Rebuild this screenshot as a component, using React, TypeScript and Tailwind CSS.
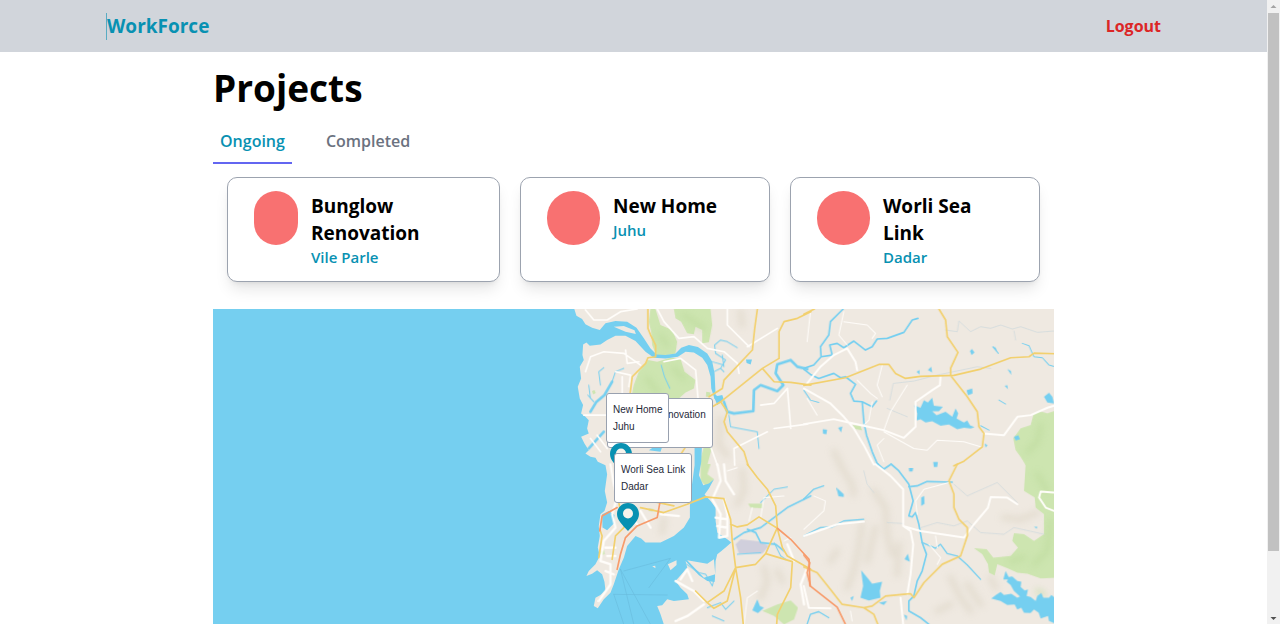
import { useState } from "react";

type Project = { name: string; place: string; avatar: string };

const projects: Project[] = [
  { name: "Bunglow Renovation", place: "Vile Parle", avatar: "w-[44px]" },
  { name: "New Home", place: "Juhu", avatar: "w-[53px]" },
  { name: "Worli Sea Link", place: "Dadar", avatar: "w-[53px]" },
];

// Map tiles share one scale: NW, SW, NE and SE quarters of the land area.
const NW = "translate(1041 -12)";
const SW = "translate(1041 465)";
const NE = "translate(1770 -12)";
const SE = "translate(1770 465)";

function MapDrawing() {
  return (
    <svg
      viewBox="0 0 2520 1140"
      preserveAspectRatio="xMinYMin slice"
      className="block h-full w-full bg-[#efe9e1]"
      fill="none"
      strokeLinejoin="round"
      strokeLinecap="round"
      role="img"
      aria-label="Map of project sites"
    >
      <defs>
        <filter id="soft" x="-20%" y="-20%" width="140%" height="140%">
          <feGaussianBlur stdDeviation="9" />
        </filter>
      </defs>

      {/* hills */}
      <g stroke="#d9d1c1" strokeWidth="18" opacity="0.5" filter="url(#soft)">
        <g transform={SE}>
          <path d="M110 5 L145 60 L150 90 M210 80 L245 130 L250 210 L265 270 M175 180 L165 250 L150 320 L130 370 M100 260 L80 290 M285 240 L280 330 M600 160 L650 165 L700 145 M440 340 L470 400 L500 440 M490 360 L530 420 M560 340 L575 370 M440 420 L400 440 M215 190 L190 290" />
        </g>
        <g transform={SW}>
          <path d="M545 20 L550 80 L530 120 M610 310 L620 350 L600 400 M650 320 L665 350 M310 165 L305 205" />
        </g>
        <g transform={NW}>
          <path d="M540 20 L545 60 M480 340 L475 420 L500 450 M820 440 L840 480" />
        </g>
      </g>

      {/* parks */}
      <g fill="#cde5b0">
        <path transform={NW} d="M285 12 L300 60 L335 75 L350 110 L345 145 L290 155 L275 120 L272 80 L265 50 L270 12 Z M340 12 L450 12 L455 60 L445 112 L425 115 L425 75 L405 65 L400 88 L380 85 L362 50 L345 40 Z M262 165 L290 170 L330 158 L360 160 L372 200 L405 225 L400 250 L375 262 L355 280 L212 280 L220 240 L235 200 Z M437 260 L450 262 L448 275 L436 275 Z M430 425 L455 425 L440 480 L415 480 Z M95 258 L102 255 L106 264 L98 268 Z" />
        <path transform={SW} d="M420 0 L450 0 L440 30 L460 45 L440 70 L420 50 Z M562 118 L605 118 L605 132 L570 130 Z M605 440 L650 420 L690 408 L712 430 L700 465 L670 480 L640 455 Z M120 262 L130 258 L133 270 L122 273 Z M265 132 L280 135 L276 142 L265 140 Z" />
        <path transform={NE} d="M688 330 L705 318 L730 325 L760 315 L760 480 L665 480 L650 455 L635 435 L628 400 L650 370 L680 360 Z M145 360 L170 362 L175 376 L155 372 Z" />
        <path transform={SE} d="M665 0 L760 0 L760 340 L710 342 L670 328 L640 325 L610 312 L580 300 L572 333 L555 325 L552 300 L535 270 L510 252 L548 255 L568 280 L620 275 L642 250 L625 230 L630 207 L660 210 L690 230 L720 210 L720 150 L695 130 L692 100 L660 80 Z" />
      </g>
      <g stroke="#b9d898" strokeWidth="14" opacity="0.55" filter="url(#soft)">
        <path transform={NW} d="M300 90 L320 120 M370 30 L430 70 M260 220 L290 260 M340 190 L370 220" />
        <path transform={SE} d="M700 30 L730 80 M740 170 L730 260 L690 300 M620 290 L660 280 M700 380 L720 390" />
        <path transform={NE} d="M710 360 L700 410 L670 440" />
      </g>

      {/* salt pans */}
      <path transform={SW} d="M540 225 L600 232 L625 245 L605 268 L535 268 L525 240 Z" fill="#d0cfdc" />

      {/* sea */}
      <path
        transform={NW}
        fill="#75cff0"
        d="M-1041 0 H38 L48 32 L65 42 L75 58 L95 68 L118 75 L135 55 L165 48 L200 50 L228 68 L250 100 L270 130 L288 148 L315 150 L345 145 L362 128 L385 120 L412 126 L440 145 L455 170 L462 205 L465 270 L485 280 L482 290 L462 282 L452 250 L450 215 L440 180 L425 158 L400 142 L375 140 L352 155 L315 160 L280 158 L255 140 L225 108 L195 92 L165 92 L140 105 L120 118 L88 122 L78 112 L68 118 L66 150 L70 165 L58 185 L62 220 L52 245 L58 280 L68 300 L62 325 L75 335 L85 345 L80 370 L85 385 L62 395 L72 415 L85 435 L75 445 L90 455 L105 458 L112 470 L135 480 L140 507 L133 557 L140 592 L132 617 L120 627 L115 662 L118 692 L112 727 L118 752 L105 777 L85 797 L78 812 L95 805 L110 795 L125 807 L132 829 L135 855 L120 869 L105 877 L100 902 L112 909 L130 882 L150 862 L160 837 L175 792 L190 757 L200 722 L225 692 L242 700 L255 712 L300 712 L340 692 L370 667 L388 637 L388 602 L394 540 L402 480 L402 424 L424 424 L422 470 L415 510 L428 540 L445 535 L460 522 L445 550 L432 568 L450 587 L465 607 L465 647 L470 682 L500 702 L512 712 L495 727 L470 747 L465 767 L464 800 L462 830 L440 827 L415 810 L375 767 L380 787 L345 827 L360 847 L380 867 L385 882 L340 887 L320 882 L305 900 L290 902 L300 927 L310 957 L330 1160 H-1041 Z"
      />
      <g fill="#efe9e1">
        <path transform={SW} d="M322 300 L348 288 L348 302 L330 318 Z M275 306 L284 304 L285 312 Z M380 288 L440 298 L460 285 L464 330 L430 340 Z" />
        <path transform={NW} d="M160 65 L190 63 L222 76 L226 87 L195 80 Z" />
      </g>
      <path transform={SW} d="M125 150 L145 140 L162 152 L160 178 L140 198 L126 190 Z" fill="#75cff0" />
      <g transform={SW} stroke="#69bdde" strokeWidth="2">
        <path d="M190 320 L330 282 L265 370 M180 315 L270 480 M180 315 L220 480 M160 390 L320 392 M160 390 L190 480" />
      </g>

      {/* lakes */}
      <g fill="#75cff0">
        <path transform={NW} d="M556 163 L574 163 L570 178 L558 174 Z M265 435 L285 422 L305 425 L300 440 Z M460 275 L485 270 L490 285 L470 300 Z" />
        <path transform={NE} d="M331 300 L350 308 L360 285 L372 292 L385 278 L390 302 L417 305 L405 318 L385 318 L398 330 L425 320 L445 335 L455 310 L463 325 L458 340 L480 352 L490 346 L498 360 L512 366 L500 370 L480 368 L460 372 L435 358 L410 362 L385 348 L365 352 L350 342 L338 346 L340 325 Z M338 200 L347 195 L347 208 Z M372 195 L382 185 L385 202 Z M498 138 L504 132 L512 142 L503 150 Z M488 255 L505 250 L506 265 L492 270 Z M565 125 L575 127 L580 140 Z M610 192 L621 198 L622 210 Z M602 242 L610 240 L612 252 Z M720 275 L735 263 L745 275 L750 295 L730 292 Z M630 395 L643 390 L648 402 L635 406 Z M57 372 L70 374 L68 387 L58 386 Z M103 368 L116 364 L112 382 Z M542 415 L551 420 L545 427 Z M388 470 L402 470 L400 485 L390 485 Z" />
        <path transform={SE} d="M172 318 L195 345 L205 358 L235 352 L228 380 L230 400 L195 408 L170 400 L178 365 Z M98 70 L120 90 L120 98 L104 96 Z M302 285 L312 268 L318 292 Z M315 12 L328 12 L326 22 L316 22 Z M352 100 L361 95 L362 118 L352 125 Z M140 400 L150 395 L145 410 Z M300 450 L310 455 L308 468 Z M225 415 L250 410 L240 422 Z M690 187 L700 187 L698 193 Z M562 402 L578 390 L590 383 L600 392 L622 388 L640 400 L648 396 L630 380 L620 362 L608 352 L612 345 L598 345 L605 320 L614 338 L625 336 L640 350 L652 352 L650 368 L662 378 L672 375 L668 395 L680 398 L695 410 L700 395 L712 386 L718 400 L735 400 L742 392 L760 405 L760 480 L735 470 L732 455 L710 462 L704 445 L690 435 L680 446 L660 445 L652 430 L640 435 L632 420 L610 422 L590 410 Z" />
        <path transform={SW} d="M575 438 L590 405 L598 425 L610 430 L592 446 Z" />
      </g>

      {/* rivers */}
      <g stroke="#75cff0" strokeWidth="5">
        <path transform={NW} strokeWidth="8" d="M90 320 L108 290 L132 270 L155 230 M85 430 L130 380 M490 290 L500 320 L520 325 L578 318 L580 255 L600 240 L650 258 L668 240 L645 205 L650 178 L690 165 L710 185 L740 192" />
        <path transform={NW} strokeWidth="3" d="M155 230 L165 200 L190 190 M90 280 L85 240 M120 240 L115 200 L130 188 M462 120 L480 105 L500 110 L530 128 M462 120 L465 145 L495 165 L480 190 L460 200 M455 170 L490 180 M302 180 L312 215 L328 250 M505 330 L510 365 L590 380 L595 430 M480 190 L490 200 M485 150 L490 185 M100 290 L82 270" />
        <path transform={NE} d="M118 12 L80 50 L75 90 L50 125 L52 155 L30 180 L0 190 M52 155 L85 150 L78 120 L100 115 L120 128 L150 108 L185 135 L205 125 L220 102 L250 100 L300 82 L325 45 L342 40 M0 192 L20 208 L45 220 L90 205 L110 218 L125 215 M125 215 L155 238 L140 265 L150 288 L175 290 L180 350 L188 390 L205 440 L222 480 M175 290 L205 305 L218 288" />
        <path transform={NE} strokeWidth="3" d="M655 115 L675 122 L685 145 L690 155 L715 158 L735 180 L750 184 M0 255 L20 285 L45 292 M585 285 L605 297 M567 125 L583 145 M530 362 L555 375" />
        <path transform={SE} d="M222 0 L240 15 L262 0 L285 20 L315 60 L328 110 L315 155 L325 158 L335 145 L345 180 L355 235 L368 270 L355 320 L340 350 L330 395 L315 410 L315 440 L350 460 L375 480 M315 68 L340 65 L370 52 L445 54" />
        <path transform={SE} strokeWidth="4" d="M355 235 L395 252 L410 240 L430 268 L460 275 L490 302 L530 345 M0 215 L50 190 L85 188 L120 170 L180 165 M0 105 L30 75 L60 65 M10 480 L20 450 L45 442 L75 460" />
        <path transform={SW} d="M520 225 L550 205 L600 190 L640 160 L680 130 L750 95 M560 195 L585 205 L600 235 L645 240 L670 260" />
        <path transform={SW} strokeWidth="3" d="M600 115 L640 75 L680 68 M530 270 L600 265 M378 300 L415 325 L435 330 L455 365 L462 335 M440 430 L480 415 L495 435 L520 410 M455 455 L490 470 M640 235 L660 275 L675 285" />
      </g>
      <g stroke="#cbd8dc" strokeWidth="2">
        <path transform={NE} d="M425 75 L460 80 L465 48 L500 80 L530 65 L560 70 L590 60 L625 72 L650 65 L700 82 L750 78 M258 285 L268 235 L330 228 L400 210 L520 185 L560 190 M250 310 L310 335 M630 78 L635 105" />
        <path transform={SE} d="M180 20 L190 60 L210 85 M352 190 L400 175 L450 185 L490 170 L530 205 L600 210 L630 190 L720 210 M450 60 L490 95 L580 55 L640 115 M250 175 L300 178" />
      </g>

      {/* minor roads */}
      <g stroke="#fffdfa" strokeWidth="5">
        <path transform={NW} d="M75 15 L100 45 L140 45 L180 20 L230 12 M290 12 L310 50 L355 100 L400 95 L440 130 L490 140 L530 175 L535 205 M75 200 L90 155 L130 140 L190 145 L240 180 M195 135 L200 175 L235 170 M165 200 L210 210 L205 245 M185 215 L185 265 M310 170 L360 160 L405 195 L412 280 M500 12 L500 60 L565 125 M560 125 L650 70 M620 380 L520 430 L522 480 M450 425 L470 480 M680 250 L640 295 L600 300 M680 250 L690 370 M640 370 L740 357 M90 400 L120 440 M110 390 L140 430 M70 330 L140 330" />
        <path transform={SW} strokeWidth="7" d="M150 0 L160 60 L170 100 L155 150 L165 190 L130 230 L120 290 L150 300 L150 360 L115 410 M470 0 L480 50 L455 105 L480 150 L475 220 L500 215 L500 150 L490 105 M490 0 L495 50 L520 90 M345 350 L400 380 L430 410 M360 345 L380 315 L395 350 M430 420 L380 455 L345 470 M300 150 L355 155 M680 240 L700 290 M240 140 L270 190 M205 150 L230 180 M135 250 L165 250 M140 275 L165 275 M135 320 L160 330 M465 160 L500 165 M470 185 L500 190 M738 315 L720 360 L730 420" />
        <path transform={SW} strokeWidth="3" d="M600 160 L610 100 L670 95 M500 20 L530 10 M575 130 L565 170 M670 230 L690 220 M550 480 L560 400 L590 380" />
        <path transform={NE} strokeWidth="6" d="M0 250 L80 295 L120 335 L150 370 L180 420 L210 478 M0 357 L90 342 L125 350 L180 362 L240 375 L300 398 L335 365 L335 290 L385 255 L408 240 L410 212 M10 235 L50 185 L90 150 L130 130 L155 170 L160 195 M540 385 L600 390 L640 335 L680 330 L730 308 L750 302" />
        <path transform={NE} strokeWidth="3" d="M120 20 L105 90 L130 120 M120 50 L190 60 L215 85 L205 100 M235 180 L220 240 L235 275 M160 225 L200 265 L220 280 M310 240 L260 320 L240 375 M240 380 L330 430 L370 435 L400 405 L480 410 L530 425 M20 20 L10 110 M205 290 L195 345 L180 360 M10 280 L40 330 M240 400 L220 420 L240 470" />
        <path transform={SE} strokeWidth="6" d="M215 0 L260 35 L298 75 L298 185 L320 200 L328 240 L320 330 L310 390 M298 185 L350 200 L480 220 L510 180 L552 130 L560 98 L610 100 L640 120 M290 400 L298 480 M0 365 L15 430 L80 432 M0 215 L100 180 L180 172 M750 85 L710 82 L705 100 L725 130 L750 140" />
        <path transform={SE} strokeWidth="3" d="M435 55 L360 75 L335 110 L340 150 M0 195 L60 140 L65 110 L30 95 M395 215 L400 250 M375 240 L410 280 L400 300 M140 440 L145 470" />
      </g>

      {/* highways */}
      <g stroke="#f2d06e" strokeWidth="5">
        <path transform={NW} d="M262 12 L262 70 L270 90 L285 120 L285 155 L262 158 L255 175 L215 215 L208 270 M590 12 L582 70 L575 135 L490 225 L485 250 L445 275 M750 20 L710 40 L670 50 L655 80 L655 160 L605 190 L480 290 L455 305 M605 190 L640 230 L690 232 L750 240 M480 290 L500 320 L490 350 L500 380 L550 440 L562 480 M375 425 L362 445" />
        <path transform={SW} d="M560 0 L590 40 L620 75 L645 125 L650 190 L615 268 L585 300 L525 310 L490 380 L440 415 L405 380 M490 105 L510 165 L515 230 L525 310 L540 400 L548 480 M510 180 L530 188 L560 182 L595 158 L650 192 L665 250 L680 275 L750 315 M440 415 L460 432 L500 410 L525 310 M240 130 L310 145 L380 120 L435 98 L490 103 M615 268 L695 292 L690 370 L650 450 L648 480 M210 150 L190 190 L165 215 L155 285 M115 280 L125 215 L118 195 M175 115 L180 140 M280 112 L340 125" />
        <path transform={NE} d="M0 28 L32 12 M0 241 L125 218 L225 178 L255 178 L275 205 L305 220 L350 214 L450 211 L530 192 L620 158 L675 155 L690 144 L755 146 M405 12 L425 45 L430 95 L462 142 L440 190 L440 211 L490 275 L520 320 L525 365 L540 385 L535 425 L480 468 L450 482" />
        <path transform={SE} d="M460 0 L435 50 L450 90 L450 130 L465 165 L490 190 L490 215 L470 275 L415 300 L360 355 L330 400 L320 388 L300 390 L245 395 L205 425 L180 430 L115 420 L80 375 L40 325 L0 308 M180 430 L210 450 L222 480 L235 660" />
      </g>
      <g stroke="#f79b6b" strokeWidth="5">
        <path transform={SW} d="M170 315 L180 270 L195 220 L230 185 L290 160 L298 115 M170 130 L125 155 L118 200 M650 192 L690 225 L745 285 L748 365" />
        <path transform={SE} d="M0 272 L18 295 L10 325 L20 365 L100 428 L125 480 L180 660" />
      </g>
    </svg>
  );
}

function Pin() {
  return (
    <svg viewBox="0 0 22 28" className="h-[28px] w-[22px]" aria-hidden="true">
      <path
        fill="#0891b2"
        d="M11 0C4.900 0 0 4.900 0 11c0 6.500 5.500 10.800 11 17 5.500-6.200 11-10.500 11-17C22 4.900 17.100 0 11 0Z"
      />
      <circle cx="11" cy="10.500" r="5" fill="#f7f3ec" />
    </svg>
  );
}

function MapLabel({ name, place, className }: { name: string; place: string; className: string }) {
  return (
    <div
      className={`absolute whitespace-nowrap rounded-[3px] border border-gray-400 bg-white px-[6px] py-[7px] font-['Liberation_Sans',sans-serif] text-[10px] leading-[17px] text-gray-800 ${className}`}
    >
      <p>{name}</p>
      <p>{place}</p>
    </div>
  );
}

function ProjectCard({ name, place, avatar }: Project) {
  return (
    <article className="flex items-start gap-[13px] rounded-[10px] border border-[#9ca3af] bg-white px-[26px] py-[13px] shadow-lg">
      <div className={`h-[54px] shrink-0 rounded-[27px] bg-[#f87171] ${avatar}`} />
      <div className="min-w-0 flex-1 pt-[2px] pr-4">
        <h2 className="text-[19px] font-bold leading-[27px] text-black">{name}</h2>
        <p className="text-[15px] font-semibold leading-[21px] text-[#0891b2]">{place}</p>
      </div>
    </article>
  );
}

export default function App() {
  const [tab, setTab] = useState("Ongoing");
  return (
    <div className="flex h-screen bg-white font-['Open_Sans','Noto_Sans',sans-serif]">
      <div className="min-w-0 flex-1 overflow-y-auto [scrollbar-width:none]">
        <header className="flex h-[52px] items-center justify-between bg-[#d1d5db] px-[106px]">
          <a href="#" className="border-l border-[#0891b2]/60 text-[19px] font-bold leading-[27px] text-[#0891b2]">
            WorkForce
          </a>
          <button type="button" className="text-[16px] font-bold leading-[27px] text-[#dc2626]">
            Logout
          </button>
        </header>

        <main className="mx-auto max-w-[841px]">
          <h1 className="pt-[12px] text-[37px] font-bold leading-[48px] text-black">Projects</h1>

          <div role="tablist" className="mt-[8px] flex gap-[27px]">
            {["Ongoing", "Completed"].map((label) => (
              <button
                key={label}
                type="button"
                role="tab"
                aria-selected={tab === label}
                onClick={() => setTab(label)}
                className={`border-b-2 px-[7px] pt-[8px] pb-[7px] text-[16px] font-semibold leading-[27px] ${
                  tab === label ? "border-[#6366f1] text-[#0891b2]" : "border-transparent text-[#6b7280]"
                }`}
              >
                {label}
              </button>
            ))}
          </div>

          <section className="mt-[13px] grid grid-cols-[273fr_250fr_250fr] gap-[20px] px-[14px]">
            {projects.map((project) => (
              <ProjectCard key={project.name} {...project} />
            ))}
          </section>

          <section className="relative mt-[27px] mb-[13px] h-[380px] overflow-hidden">
            <MapDrawing />
            <MapLabel name="Bunglow Renovation" place="Vile Parle" className="top-[89px] left-[394px]" />
            <div className="absolute top-[134px] left-[397px]">
              <Pin />
            </div>
            <MapLabel name="New Home" place="Juhu" className="top-[84px] left-[393px]" />
            <MapLabel name="Worli Sea Link" place="Dadar" className="top-[144px] left-[401px]" />
            <div className="absolute top-[194px] left-[404px]">
              <Pin />
            </div>
          </section>
        </main>
      </div>

      <div className="flex w-[13px] shrink-0 flex-col items-center bg-[#f1f1f1]" aria-hidden="true">
        <svg viewBox="0 0 13 13" className="h-[13px] w-[13px] shrink-0">
          <path d="M3.500 8 6.500 5 9.500 8Z" fill="#a3a3a3" />
        </svg>
        <div className="flex w-[11px] flex-1 flex-col">
          <div className="h-[90%] bg-[#c1c1c1]" />
        </div>
        <svg viewBox="0 0 13 13" className="h-[13px] w-[13px] shrink-0">
          <path d="M3.500 6 6.500 9 9.500 6Z" fill="#505050" />
        </svg>
      </div>
    </div>
  );
}
